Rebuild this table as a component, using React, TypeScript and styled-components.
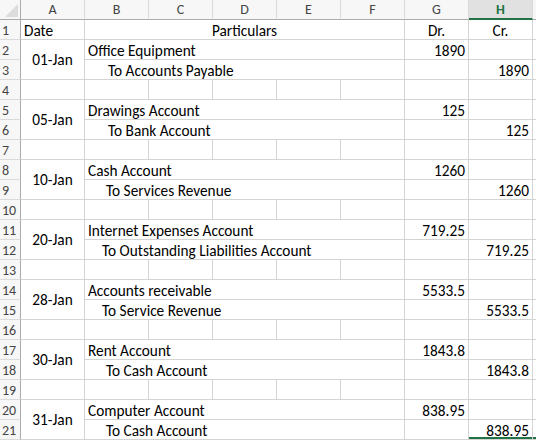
import * as React from 'react';
import styled, { createGlobalStyle } from 'styled-components';

const GlobalStyle = createGlobalStyle`
  html, body {
    margin: 0;
    padding: 0;
    background: #ffffff;
  }
  body {
    font-family: Carlito, "Liberation Sans", Arial, sans-serif;
  }
`;

const Sheet = styled.div`
  display: grid;
  grid-template-columns: 21px repeat(8, 64px) 1fr;
  grid-template-rows: 20px;
  grid-auto-rows: 20px;
  width: 536px;
  height: 440px;
  overflow: hidden;
  background: #ffffff;
`;

const Corner = styled.div`
  position: relative;
  box-sizing: border-box;
  background: #f7f7f7;
  border-right: 1px solid #ababab;
  border-bottom: 1px solid #ababab;

  &::after {
    content: '';
    position: absolute;
    right: 2px;
    bottom: 2px;
    width: 0;
    height: 0;
    border-left: 13px solid transparent;
    border-bottom: 13px solid #dcdcdc;
  }
`;

const ColHead = styled.div<{ $active?: boolean }>`
  box-sizing: border-box;
  display: flex;
  align-items: center;
  justify-content: center;
  font-size: 14px;
  color: ${p => (p.$active ? '#217346' : '#444444')};
  font-weight: ${p => (p.$active ? 700 : 400)};
  background: ${p => (p.$active ? '#e1e1e1' : '#f7f7f7')};
  border-right: 1px solid #dadada;
  border-bottom: ${p => (p.$active ? '2px solid #217346' : '1px solid #ababab')};
`;

const RowHead = styled.div<{ $row: number }>`
  grid-column: 1;
  grid-row: ${p => p.$row + 1};
  box-sizing: border-box;
  display: flex;
  align-items: flex-end;
  padding: 0 0 0 2px;
  font-size: 14px;
  color: #444444;
  background: #f7f7f7;
  border-right: 1px solid #ababab;
  border-bottom: 1px solid #dadada;
`;

const Cell = styled.div<{
  $row: number;
  $col: number;
  $span?: number;
  $rows?: number;
  $align?: 'left' | 'center' | 'right';
  $indent?: number;
  $middle?: boolean;
  $selected?: boolean;
}>`
  grid-row: ${p => p.$row + 1} / span ${p => p.$rows || 1};
  grid-column: ${p => p.$col + 1} / span ${p => p.$span || 1};
  box-sizing: border-box;
  display: flex;
  align-items: ${p => (p.$middle ? 'center' : 'flex-end')};
  justify-content: ${p =>
    p.$align === 'right' ? 'flex-end' : p.$align === 'center' ? 'center' : 'flex-start'};
  padding: 0 3px 0 ${p => (p.$indent ?? 3)}px;
  font-size: 15.3px;
  line-height: 16px;
  color: #000000;
  white-space: nowrap;
  overflow: visible;
  border-right: 1px solid #d4d4d4;
  border-bottom: 1px solid #d4d4d4;
  box-shadow: ${p => (p.$selected ? 'inset 0 -2px 0 #217346' : 'none')};
`;

const entries = [
  { date: '01-Jan', dr: 'Office Equipment', cr: 'To Accounts Payable', amt: '1890', indent: 23 },
  { date: '05-Jan', dr: 'Drawings Account', cr: 'To Bank Account', amt: '125', indent: 23 },
  { date: '10-Jan', dr: 'Cash Account', cr: 'To Services Revenue', amt: '1260', indent: 21 },
  { date: '20-Jan', dr: 'Internet Expenses Account', cr: 'To Outstanding Liabilities Account', amt: '719.25', indent: 17 },
  { date: '28-Jan', dr: 'Accounts receivable', cr: 'To Service Revenue', amt: '5533.5', indent: 17 },
  { date: '30-Jan', dr: 'Rent Account', cr: 'To Cash Account', amt: '1843.8', indent: 21 },
  { date: '31-Jan', dr: 'Computer Account', cr: 'To Cash Account', amt: '838.95', indent: 21 },
];

const letters = ['A', 'B', 'C', 'D', 'E', 'F', 'G', 'H', ''];

const App = () => {
  const cells: React.ReactNode[] = [];

  cells.push(<Cell key="a1" $row={1} $col={1}>Date</Cell>);
  cells.push(<Cell key="b1" $row={1} $col={2} $span={5} $align="center">Particulars</Cell>);
  cells.push(<Cell key="g1" $row={1} $col={7} $align="center">Dr.</Cell>);
  cells.push(<Cell key="h1" $row={1} $col={8} $align="center">Cr.</Cell>);
  cells.push(<Cell key="i1" $row={1} $col={9} />);

  entries.forEach((e, i) => {
    const r = 2 + i * 3;
    const last = i === entries.length - 1;
    cells.push(<Cell key={`a${r}`} $row={r} $col={1} $rows={2} $align="center" $middle>{e.date}</Cell>);
    cells.push(<Cell key={`b${r}`} $row={r} $col={2} $span={5}>{e.dr}</Cell>);
    cells.push(<Cell key={`g${r}`} $row={r} $col={7} $align="right">{e.amt}</Cell>);
    cells.push(<Cell key={`h${r}`} $row={r} $col={8} />);
    cells.push(<Cell key={`i${r}`} $row={r} $col={9} />);
    cells.push(<Cell key={`b${r + 1}`} $row={r + 1} $col={2} $span={5} $indent={e.indent}>{e.cr}</Cell>);
    cells.push(<Cell key={`g${r + 1}`} $row={r + 1} $col={7} />);
    cells.push(<Cell key={`h${r + 1}`} $row={r + 1} $col={8} $align="right" $selected={last}>{e.amt}</Cell>);
    cells.push(<Cell key={`i${r + 1}`} $row={r + 1} $col={9} $selected={last} />);
    if (!last) {
      for (let c = 1; c <= 9; c++) {
        cells.push(<Cell key={`e${r + 2}-${c}`} $row={r + 2} $col={c} />);
      }
    }
  });

  return (
    <>
      <GlobalStyle />
      <Sheet>
        <Corner />
        {letters.map((l, i) => (
          <ColHead key={i} $active={l === 'H'}>{l}</ColHead>
        ))}
        {Array.from({ length: 21 }, (_, i) => (
          <RowHead key={i} $row={i + 1}>{i + 1}</RowHead>
        ))}
        {cells}
      </Sheet>
    </>
  );
};

export default App;
